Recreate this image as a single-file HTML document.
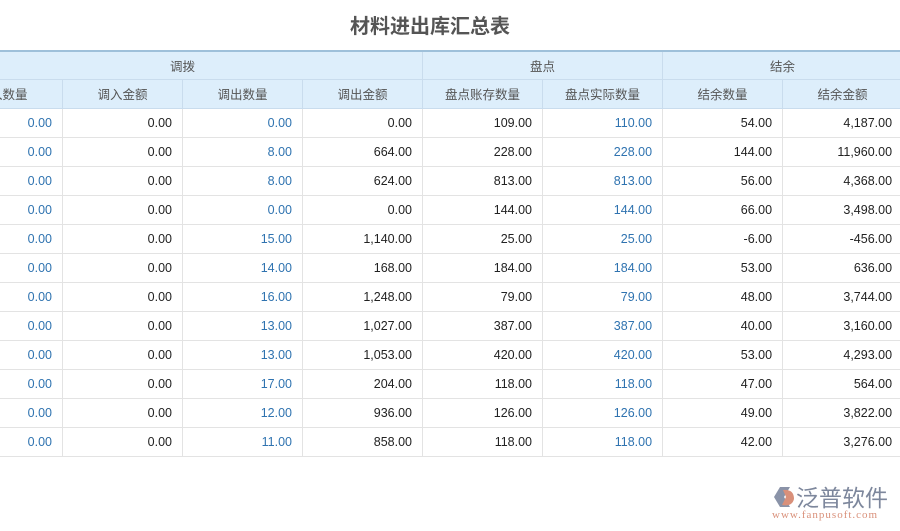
<!DOCTYPE html>
<html><head><meta charset="utf-8"><style>
body{margin:0;width:900px;height:531px;background:#fff;overflow:hidden;position:relative;font-family:"Liberation Sans","Noto Sans CJK SC",sans-serif;}
h1{position:absolute;top:10px;left:0;width:860px;text-align:center;margin:0;font-size:20px;font-weight:bold;color:#555;}
table{position:absolute;left:-58px;top:50px;width:960px;border-collapse:collapse;table-layout:fixed;}
td,th{padding:0 10px 0 0;box-sizing:border-box;font-size:12.5px;border:1px solid #e3e3e3;}
th{background:#ddeefb;color:#555;font-weight:normal;height:29px;text-align:center;padding:0;border-color:#c9dced;}
tr.top th{border-top:2px solid #9ec0da;height:28px;}
td{height:29px;text-align:right;color:#222;}
td.b{color:#2f73b0;}
.logo{position:absolute;left:770px;top:483px;}
</style></head><body>
<h1>材料进出库汇总表</h1>
<table>
<colgroup><col style="width:120px"><col style="width:120px"><col style="width:120px"><col style="width:120px"><col style="width:120px"><col style="width:120px"><col style="width:120px"><col style="width:120px"></colgroup>
<tr class="top"><th colspan="4">调拨</th><th colspan="2">盘点</th><th colspan="2">结余</th></tr>
<tr><th>调入数量</th><th>调入金额</th><th>调出数量</th><th>调出金额</th><th>盘点账存数量</th><th>盘点实际数量</th><th>结余数量</th><th>结余金额</th></tr>
<tr><td class="b">0.00</td><td>0.00</td><td class="b">0.00</td><td>0.00</td><td>109.00</td><td class="b">110.00</td><td>54.00</td><td>4,187.00</td></tr>
<tr><td class="b">0.00</td><td>0.00</td><td class="b">8.00</td><td>664.00</td><td>228.00</td><td class="b">228.00</td><td>144.00</td><td>11,960.00</td></tr>
<tr><td class="b">0.00</td><td>0.00</td><td class="b">8.00</td><td>624.00</td><td>813.00</td><td class="b">813.00</td><td>56.00</td><td>4,368.00</td></tr>
<tr><td class="b">0.00</td><td>0.00</td><td class="b">0.00</td><td>0.00</td><td>144.00</td><td class="b">144.00</td><td>66.00</td><td>3,498.00</td></tr>
<tr><td class="b">0.00</td><td>0.00</td><td class="b">15.00</td><td>1,140.00</td><td>25.00</td><td class="b">25.00</td><td>-6.00</td><td>-456.00</td></tr>
<tr><td class="b">0.00</td><td>0.00</td><td class="b">14.00</td><td>168.00</td><td>184.00</td><td class="b">184.00</td><td>53.00</td><td>636.00</td></tr>
<tr><td class="b">0.00</td><td>0.00</td><td class="b">16.00</td><td>1,248.00</td><td>79.00</td><td class="b">79.00</td><td>48.00</td><td>3,744.00</td></tr>
<tr><td class="b">0.00</td><td>0.00</td><td class="b">13.00</td><td>1,027.00</td><td>387.00</td><td class="b">387.00</td><td>40.00</td><td>3,160.00</td></tr>
<tr><td class="b">0.00</td><td>0.00</td><td class="b">13.00</td><td>1,053.00</td><td>420.00</td><td class="b">420.00</td><td>53.00</td><td>4,293.00</td></tr>
<tr><td class="b">0.00</td><td>0.00</td><td class="b">17.00</td><td>204.00</td><td>118.00</td><td class="b">118.00</td><td>47.00</td><td>564.00</td></tr>
<tr><td class="b">0.00</td><td>0.00</td><td class="b">12.00</td><td>936.00</td><td>126.00</td><td class="b">126.00</td><td>49.00</td><td>3,822.00</td></tr>
<tr><td class="b">0.00</td><td>0.00</td><td class="b">11.00</td><td>858.00</td><td>118.00</td><td class="b">118.00</td><td>42.00</td><td>3,276.00</td></tr>
</table>
<div class="logo">
<svg width="26" height="24" style="position:absolute;left:0;top:2px"><path d="M4 12 L10 2 L20 2 L14 12 L20 22 L10 22Z" fill="#8a93a8"/><path d="M13 5 Q24 4 24 14 Q22 22 12 20 L16 12Z" fill="#d9907a"/></svg>
<div style="position:absolute;left:26px;top:-4px;font-size:23px;color:#7d879c;white-space:nowrap;letter-spacing:0px;font-family:'Noto Sans CJK SC',sans-serif">泛普软件</div>
<div style="position:absolute;left:2px;top:26px;font-size:11px;color:#d9907a;font-family:'Liberation Serif',serif;white-space:nowrap;letter-spacing:1px">www.fanpusoft.com</div>
</div>
</body></html>
